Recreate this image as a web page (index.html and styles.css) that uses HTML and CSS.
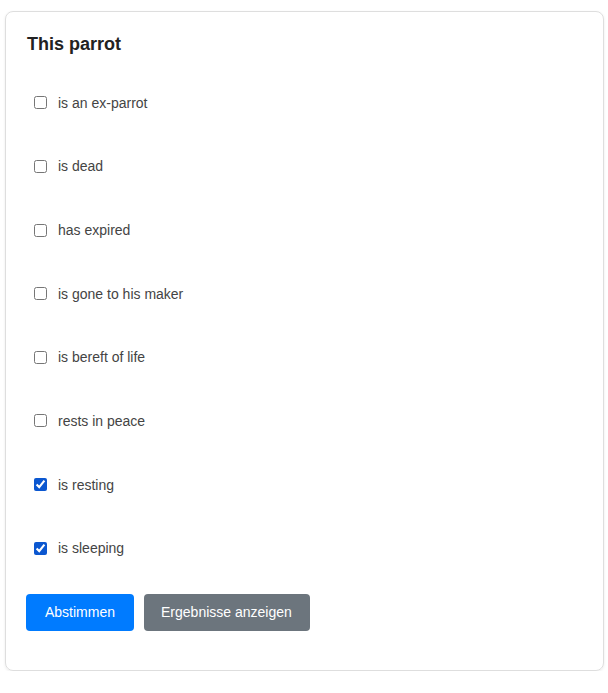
FILE: index.html
```html
<!DOCTYPE html>
<html lang="de">
<head>
  <meta charset="UTF-8" />
  <meta name="viewport" content="width=device-width, initial-scale=1.0" />
  <title>Umfrage</title>
  <link rel="stylesheet" href="styles.css">
</head>
<body>
  <div class="poll">
    <h3 class="poll-title">This parrot</h3>

    <form class="poll-options">
      <label class="option"><input type="checkbox"> <span>is an ex-parrot</span></label>
      <label class="option"><input type="checkbox"> <span>is dead</span></label>
      <label class="option"><input type="checkbox"> <span>has expired</span></label>
      <label class="option"><input type="checkbox"> <span>is gone to his maker</span></label>
      <label class="option"><input type="checkbox"> <span>is bereft of life</span></label>
      <label class="option"><input type="checkbox"> <span>rests in peace</span></label>
      <label class="option"><input type="checkbox" checked> <span>is resting</span></label>
      <label class="option"><input type="checkbox" checked> <span>is sleeping</span></label>

      <div class="poll-actions">
        <button type="button" class="btn btn-primary">Abstimmen</button>
        <button type="button" class="btn btn-secondary">Ergebnisse anzeigen</button>
      </div>
    </form>
  </div>
</body>
</html>
```

FILE: styles.css
```css
body {
  margin: 0;
  padding: 11px 4px 0 5px;
  font-family: "Liberation Sans", Arial, sans-serif;
  background-color: #ffffff;
  color: #212529;
}

.poll {
  border: 1px solid #dedede;
  border-radius: 8px;
  box-shadow: 0 1px 3px rgba(0, 0, 0, 0.08);
  padding: 20px 20px 39px 20px;
}

.poll-title {
  margin: 0 0 15px 0;
  font-size: 18px;
  font-weight: bold;
  line-height: 24px;
  color: #222;
  padding-left: 1px;
}

.poll-options {
  margin: 0;
}

.option {
  display: flex;
  align-items: center;
  height: 63.64px;
  padding-left: 4px;
  font-size: 14px;
  color: #444;
  cursor: pointer;
}

.option input {
  width: 13px;
  height: 13px;
  margin: 0 0 0 4px;
  accent-color: #0b57d0;
}

.option span {
  margin-left: 11px;
}

/* botones */
.poll-actions {
  display: flex;
  gap: 10px;
  margin-top: 14px;
}

.btn {
  font-family: inherit;
  font-size: 14px;
  line-height: 17px;
  padding: 10px 19px;
  border: none;
  border-radius: 4px;
  color: #fff;
  cursor: pointer;
}

.btn-primary {
  background-color: #007bff;
}

.btn-secondary {
  background-color: #6c757d;
  padding: 10px 18px 10px 17px;
}
```
